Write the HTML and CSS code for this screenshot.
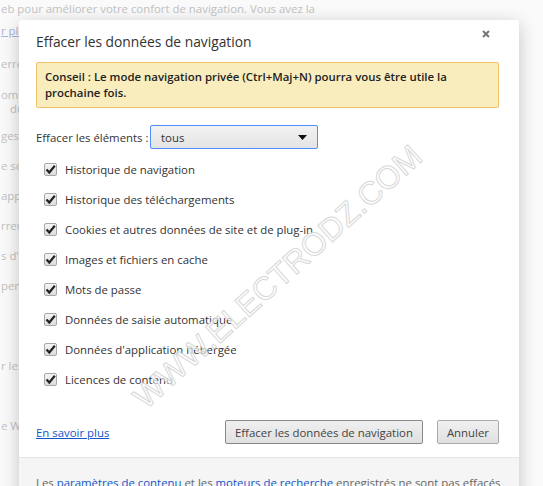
FILE: index.html
```html
<!DOCTYPE html>
<html lang="fr">
<head>
  <meta charset="UTF-8">
  <title>Effacer les données de navigation</title>
  <link rel="stylesheet" href="styles.css">
</head>
<body>
  <div class="page">
    <p class="intro">eb pour améliorer votre confort de navigation. Vous avez la<br><a href="#">r plus</a></p>
    <div class="item first">erreur</div>
    <div class="item pair">ompléter<br><span class="indent">du</span></div>
    <div class="item">ges p</div>
    <div class="item">e sé</div>
    <div class="item">app</div>
    <div class="item">rreu</div>
    <div class="item">s d'u</div>
    <div class="item">pen</div>
    <div class="item far">r les</div>
    <div class="item farther">e We</div>
  </div>

  <div class="dialog">
    <div class="dialog-head">
      <h1>Effacer les données de navigation</h1>
      <svg class="close" width="8" height="8" viewBox="0 0 8 8"><path d="M1 1l6 6M7 1L1 7" stroke="#777" stroke-width="2"/></svg>
    </div>

    <div class="tip">Conseil : Le mode navigation privée (Ctrl+Maj+N) pourra vous être utile la prochaine fois.</div>

    <div class="range">
      <label>Effacer les éléments :</label>
      <div class="select">
        <span>tous</span>
        <svg width="9" height="5" viewBox="0 0 9 5"><path d="M0 0h9L4.5 5z" fill="#111"/></svg>
      </div>
    </div>

    <ul class="checks">
      <li><span class="box"><svg width="11" height="11" viewBox="0 0 11 11"><path d="M1.5 5.5l2.8 3L9.8 1.8" fill="none" stroke="#222" stroke-width="2.2"/></svg></span>Historique de navigation</li>
      <li><span class="box"><svg width="11" height="11" viewBox="0 0 11 11"><path d="M1.5 5.5l2.8 3L9.8 1.8" fill="none" stroke="#222" stroke-width="2.2"/></svg></span>Historique des téléchargements</li>
      <li><span class="box"><svg width="11" height="11" viewBox="0 0 11 11"><path d="M1.5 5.5l2.8 3L9.8 1.8" fill="none" stroke="#222" stroke-width="2.2"/></svg></span>Cookies et autres données de site et de plug-in</li>
      <li><span class="box"><svg width="11" height="11" viewBox="0 0 11 11"><path d="M1.5 5.5l2.8 3L9.8 1.8" fill="none" stroke="#222" stroke-width="2.2"/></svg></span>Images et fichiers en cache</li>
      <li><span class="box"><svg width="11" height="11" viewBox="0 0 11 11"><path d="M1.5 5.5l2.8 3L9.8 1.8" fill="none" stroke="#222" stroke-width="2.2"/></svg></span>Mots de passe</li>
      <li><span class="box"><svg width="11" height="11" viewBox="0 0 11 11"><path d="M1.5 5.5l2.8 3L9.8 1.8" fill="none" stroke="#222" stroke-width="2.2"/></svg></span>Données de saisie automatique</li>
      <li><span class="box"><svg width="11" height="11" viewBox="0 0 11 11"><path d="M1.5 5.5l2.8 3L9.8 1.8" fill="none" stroke="#222" stroke-width="2.2"/></svg></span>Données d'application hébergée</li>
      <li><span class="box"><svg width="11" height="11" viewBox="0 0 11 11"><path d="M1.5 5.5l2.8 3L9.8 1.8" fill="none" stroke="#222" stroke-width="2.2"/></svg></span>Licences de contenu</li>
    </ul>

    <div class="actions">
      <a href="#" class="more">En savoir plus</a>
      <div class="buttons">
        <button class="default">Effacer les données de navigation</button>
        <button>Annuler</button>
      </div>
    </div>

    <div class="dialog-foot">
      Les <a href="#">paramètres de contenu</a> et les <a href="#">moteurs de recherche</a> enregistrés ne sont pas effacés
    </div>
  </div>

  <div class="watermark">WWW.ELECTRODZ.COM</div>
</body>
</html>
```

FILE: styles.css
```css
html, body {
  margin: 0;
  height: 486px;
  overflow: hidden;
}

body {
  font-family: 'Open Sans', sans-serif;
  font-size: 11.4px;
  background: #fafafa;
  color: #333;
  position: relative;
}

/* faded settings page behind the dialog */
.page {
  color: #c2c2c2;
  padding-left: 1px;
}

.intro {
  margin: -2px 0 0;
  line-height: 22px;
}

.intro a {
  color: #aab3dd;
}

.item {
  margin-top: 10px;
  line-height: 20px;
}

.item.first { margin-top: 12px; }
.item.pair { margin-top: 14px; line-height: 14px; margin-bottom: 4px; }
.item.far { margin-top: 60px; }
.item.farther { margin-top: 40px; }

.indent { margin-left: 9px; }

/* dialog */
.dialog {
  position: absolute;
  left: 19px;
  top: 20px;
  width: 500px;
  height: 520px;
  background: #fff;
  border-radius: 3px;
  box-shadow: 0 4px 18px rgba(0, 0, 0, 0.22);
  box-sizing: border-box;
  padding: 0 20px 0 17px;
}

.dialog-head {
  display: flex;
  justify-content: space-between;
  align-items: flex-start;
  padding-top: 12px;
}

h1 {
  margin: 0;
  font-size: 13.8px;
  font-weight: normal;
  line-height: 20px;
  color: #333;
}

.close {
  margin: -2px 9px 0 0;
}

.tip {
  margin-top: 10px;
  background: #f9edbe;
  border: 1px solid #f0c36d;
  border-radius: 2px;
  padding: 6px 8px;
  font-weight: 600;
  line-height: 16px;
  color: #222;
}

.range {
  display: flex;
  align-items: center;
  margin-top: 17px;
}

.range label {
  width: 114px;
  white-space: nowrap;
}

.select {
  width: 168px;
  height: 24px;
  box-sizing: border-box;
  border: 1px solid #4d90fe;
  border-radius: 2px;
  background: linear-gradient(#f2f2f2, #e4e4e4);
  display: flex;
  align-items: center;
  justify-content: space-between;
  padding: 0 10px;
}

.checks {
  list-style: none;
  margin: 5px 0 0;
  padding: 0 0 0 8px;
}

.checks li {
  height: 30px;
  display: flex;
  align-items: center;
  gap: 8px;
}

.box {
  width: 13px;
  height: 13px;
  box-sizing: border-box;
  border: 1px solid #a8a8a8;
  border-radius: 2px;
  background: linear-gradient(#f4f4f4, #dcdcdc);
  display: flex;
  align-items: center;
  justify-content: center;
}

.actions {
  display: flex;
  justify-content: space-between;
  align-items: center;
  margin-top: 26px;
}

.more {
  color: #15c;
}

.buttons {
  display: flex;
  gap: 14px;
}

button {
  font-family: inherit;
  font-size: 11.4px;
  color: #444;
  height: 24px;
  padding: 0 9px;
  border: 1px solid #aaa;
  border-radius: 2px;
  background: linear-gradient(#f0f0f0, #e0e0e0);
}

button.default {
  border-color: #888;
}

.dialog-foot {
  margin: 13px -20px 0 -17px;
  border-top: 1px solid #e6e6e6;
  background: #f5f5f5;
  padding: 17px 0 0 17px;
  height: 80px;
  color: #666;
  line-height: 16px;
  white-space: nowrap;
  overflow: hidden;
}

.dialog-foot a {
  color: #15c;
  text-decoration: none;
}

/* site watermark printed over the screenshot */
.watermark {
  position: absolute;
  left: 278px;
  top: 277px;
  transform: translate(-50%, -50%) rotate(-42deg);
  font-family: 'Liberation Sans', sans-serif;
  font-size: 32px;
  white-space: nowrap;
  color: rgba(255, 255, 255, 0.6);
  -webkit-text-stroke: 1px #d8d8d8;
  pointer-events: none;
}
```
